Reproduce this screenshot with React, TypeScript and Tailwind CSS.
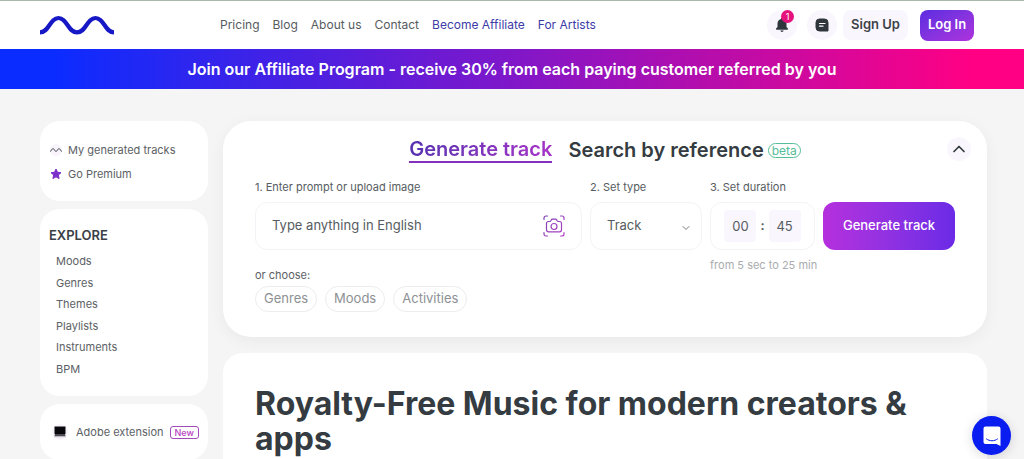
import React, { useState } from 'react';
import { ChevronDown, ChevronUp } from 'lucide-react';

const navItems = [
  { href: '#pricing', label: 'Pricing' },
  { href: '#blog', label: 'Blog' },
  { href: '#about', label: 'About us' },
  { href: '#contact', label: 'Contact' },
  { href: '#affiliate', label: 'Become Affiliate', highlight: true },
  { href: '#artists', label: 'For Artists', highlight: true },
];

const exploreItems = ['Moods', 'Genres', 'Themes', 'Playlists', 'Instruments', 'BPM'];

function Logo() {
  return (
    <svg width="74" height="20" viewBox="0 0 74 20" fill="none" aria-hidden="true">
      <path
        d="M0 17.4C9 17.4 10 3 18.5 3C27 3 28 17.4 37 17.4C46 17.4 47 3 55.5 3C64 3 65 17.4 74 17.4"
        stroke="#1518c4"
        strokeWidth="4.2"
      />
    </svg>
  );
}

function BellIcon() {
  return (
    <svg width="14" height="16" viewBox="0 0 14 16" fill="#2f373d" aria-hidden="true">
      <path d="M7 1c.7 0 1.1.5 1.1 1.1C10.3 2.7 11.5 4.5 11.5 6.6V10l1.4 1.5c.4.5.1 1.2-.6 1.2H1.700c-.7 0-1-.7-.6-1.2L2.500 10V6.600c0-2.100 1.200-3.900 3.400-4.500C5.900 1.500 6.300 1 7 1Z" />
      <path d="M5.300 13.500h3.400c-.2.900-.8 1.400-1.700 1.400s-1.500-.5-1.700-1.400Z" />
    </svg>
  );
}

function NotesIcon() {
  return (
    <svg width="14" height="14" viewBox="0 0 14 14" aria-hidden="true">
      <path d="M4.500 1h5A3.500 3.500 0 0 1 13 4.500V13H4.500A3.500 3.500 0 0 1 1 9.500v-5A3.500 3.500 0 0 1 4.500 1Z" fill="#2f373d" stroke="#2f373d" strokeLinejoin="round" />
      <path d="M4.500 5.500h5.500M4.500 8.200h3.500" stroke="#ffffff" strokeWidth="1.200" strokeLinecap="round" />
    </svg>
  );
}

function CameraIcon() {
  return (
    <svg width="22" height="22" viewBox="0 0 22 22" fill="none" strokeWidth="1.200" strokeLinecap="round" strokeLinejoin="round" aria-hidden="true">
      <defs>
        <linearGradient id="camera" x1="0" y1="0" x2="22" y2="22" gradientUnits="userSpaceOnUse">
          <stop stopColor="#7b3fb5" />
          <stop offset="1" stopColor="#b544c4" />
        </linearGradient>
      </defs>
      <g stroke="url(#camera)">
        <path d="M1 4.500V3a2 2 0 0 1 2-2h1.500M17.500 1H19a2 2 0 0 1 2 2v1.500M21 17.500V19a2 2 0 0 1-2 2h-1.500M4.500 21H3a2 2 0 0 1-2-2v-1.500" />
        <path d="M5.500 6.500h1.200c.7 0 1-.4 1.300-1l.2-.5c.3-.6.700-.9 1.300-.9h3c.6 0 1 .3 1.300.9l.2.500c.3.600.6 1 1.300 1h1.200c1.200 0 2 .8 2 2v6.300c0 1.200-.8 2-2 2h-11c-1.200 0-2-.8-2-2V8.500c0-1.200.8-2 2-2Z" />
        <circle cx="11" cy="11.500" r="3" />
      </g>
    </svg>
  );
}

function LaptopIcon() {
  return (
    <svg width="12" height="12" viewBox="0 0 12 12" aria-hidden="true">
      <path d="M.5.500h11v7.500H.5z" fill="#08080c" />
      <path d="M1 8h10l.6 2.300H.4z" fill="#4e4a54" />
      <path d="M.4 10.300h11.200v.9H.4z" fill="#b9b5bf" />
    </svg>
  );
}

function Header() {
  return (
    <header className="flex h-[49px] items-center justify-between border-t border-[#a9b8aa] bg-white pr-[50px] pl-10">
      <div className="flex items-center">
        <a href="#home" aria-label="Home" className="mr-[106px]">
          <Logo />
        </a>
        <nav className="flex items-center gap-[13px]">
          {navItems.map((item) => (
            <a
              key={item.href}
              href={item.href}
              className={`text-[12px] whitespace-nowrap ${item.highlight ? 'text-[#3c3ca8]' : 'text-[#565b5f]'}`}
            >
              {item.label}
            </a>
          ))}
        </nav>
      </div>

      <div className="flex items-center">
        <button aria-label="Notifications" className="relative mr-2.5 flex size-[30px] items-center justify-center rounded-full bg-[#faf6fd]">
          <BellIcon />
          <span className="absolute top-0 left-[14px] flex size-[13px] items-center justify-center rounded-full bg-[#e5127d] text-[9px] text-white">
            1
          </span>
        </button>
        <button aria-label="Messages" className="mr-1.5 flex size-[30px] items-center justify-center rounded-full bg-[#faf6fd]">
          <NotesIcon />
        </button>
        <button className="mr-3 h-[30px] w-[65px] rounded-lg bg-[#faf6fd] text-[13px] font-semibold whitespace-nowrap text-[#3d4247]">
          Sign Up
        </button>
        <button className="h-[31px] w-[54px] rounded-lg bg-gradient-to-br from-[#5b2be0] to-[#ad31dd] text-[13px] font-semibold whitespace-nowrap text-white">
          Log In
        </button>
      </div>
    </header>
  );
}

function Sidebar() {
  return (
    <aside className="flex w-[168px] shrink-0 flex-col gap-2 text-[11px] text-[#5c6165]">
      <div className="flex flex-col gap-2 rounded-[20px] bg-white px-2.5 pt-[21px] pb-[19px]">
        <a href="#tracks" className="flex h-4 items-center gap-1.5">
          <svg width="12" height="12" viewBox="0 0 12 12" fill="none" aria-hidden="true">
            <circle cx="6" cy="6" r="6" fill="#f9f3fc" />
            <path d="M0 7.500C1.500 7.500 1.600 4.500 3 4.500S4.500 7.500 6 7.500 7.600 4.500 9 4.500s1.500 3 3 3" stroke="#5c6165" />
          </svg>
          My generated tracks
        </a>
        <a href="#premium" className="flex h-4 items-center gap-1.5">
          <svg width="12" height="12" viewBox="0 0 24 24" fill="#7b2fc9" stroke="#7b2fc9" strokeWidth="2" strokeLinejoin="round" aria-hidden="true">
            <path d="m12 2 3 6.500 7 .8-5.200 4.800 1.400 7L12 17.600l-6.200 3.500 1.400-7L2 9.300l7-.8Z" />
          </svg>
          Go Premium
        </a>
      </div>

      <div className="rounded-[20px] bg-white px-[9px] pt-4 pb-[17px]">
        <h2 className="text-[13px] leading-5 font-semibold text-[#3a4046]">EXPLORE</h2>
        <ul className="mt-1.5 flex h-32 flex-col justify-between pl-[7px]">
          {exploreItems.map((item) => (
            <li key={item} className="leading-5">
              <a href={`#${item}`}>{item}</a>
            </li>
          ))}
        </ul>
      </div>

      <div className="flex h-14 items-center rounded-[20px] bg-white pl-3">
        <span className="mr-2 flex size-4 items-center justify-center rounded-full bg-[#f9f3fc]">
          <LaptopIcon />
        </span>
        <a href="#adobe" className="whitespace-nowrap">Adobe extension</a>
        <span className="ml-1.5 rounded-[3px] border border-[#a44bbb] px-1 text-[9px] leading-[11px] font-medium text-[#b93fc4]">
          New
        </span>
      </div>
    </aside>
  );
}

function GeneratePanel() {
  const [prompt, setPrompt] = useState('');
  const [minutes, setMinutes] = useState('00');
  const [seconds, setSeconds] = useState('45');

  return (
    <section className="relative rounded-[28px] bg-white px-8 pt-[15px] pb-[25px] shadow-[0_4px_16px_rgba(0,0,0,0.05)]">
      <div className="flex h-7 items-center justify-center gap-4 text-[20px] leading-6 font-semibold">
        <button className="border-b-2 border-[#8430bb] bg-gradient-to-r from-[#5632b0] to-[#a632c8] bg-clip-text text-transparent">
          Generate track
        </button>
        <button className="flex items-center gap-1 text-[#343b41]">
          Search by reference
          <span className="rounded-full border border-[#56bd99] px-[3px] text-[12px] leading-[13px] font-normal text-[#56bd99]">beta</span>
        </button>
      </div>
      <button aria-label="Collapse" className="absolute top-4 right-4 flex size-6 items-center justify-center rounded-full bg-[#faf6fd]">
        <ChevronUp className="size-5 text-[#2f373d]" />
      </button>

      <form className="mt-3.5 flex gap-2 text-[#565c61]" onSubmit={(e) => e.preventDefault()}>
        <div className="min-w-0 flex-1">
          <label htmlFor="prompt" className="block h-6 text-[11px] leading-[18px]">1. Enter prompt or upload image</label>
          <div className="flex h-12 items-center rounded-xl border border-[#f4f2f6] px-4">
            <input
              id="prompt"
              value={prompt}
              onChange={(e) => setPrompt(e.target.value)}
              placeholder="Type anything in English"
              className="min-w-0 flex-1 text-[13px] outline-none placeholder:text-[#565c61]"
            />
            <button type="button" aria-label="Upload image">
              <CameraIcon />
            </button>
          </div>
        </div>

        <div className="w-28">
          <label htmlFor="type" className="block h-6 text-[11px] leading-[18px]">2. Set type</label>
          <div className="relative">
            <select id="type" className="h-12 w-full appearance-none rounded-xl border border-[#f4f2f6] px-4 text-[13px]">
              <option>Track</option>
              <option>Loop</option>
              <option>Mix</option>
            </select>
            <ChevronDown className="pointer-events-none absolute top-5 right-2.5 size-3 text-[#777c80]" />
          </div>
        </div>

        <div className="w-[105px]">
          <label htmlFor="minutes" className="block h-6 text-[11px] leading-[18px]">3. Set duration</label>
          <div className="flex h-12 items-center justify-center gap-1 rounded-xl border border-[#f4f2f6] text-[13px]">
            <input
              id="minutes"
              value={minutes}
              onChange={(e) => setMinutes(e.target.value)}
              className="size-8 rounded-sm bg-[#faf6fd] text-center outline-none"
            />
            <span className="font-semibold">:</span>
            <input
              aria-label="Seconds"
              value={seconds}
              onChange={(e) => setSeconds(e.target.value)}
              className="size-8 rounded-sm bg-[#faf6fd] text-center outline-none"
            />
          </div>
          <p className="mt-1.5 text-[11px] leading-[18px] whitespace-nowrap text-[#a9acae]">from 5 sec to 25 min</p>
        </div>

        <button className="mt-6 h-12 w-[132px] rounded-xl bg-gradient-to-r from-[#b52fdd] to-[#6b2ae6] text-[13px] font-medium text-white">
          Generate track
        </button>
      </form>

      <p className="-mt-2 text-[11px] leading-[18px] text-[#5c6165]">or choose:</p>
      <div className="mt-0.5 flex gap-2 text-[13px] text-[#8d9195]">
        <button className="h-[26px] rounded-full border border-[#ededf0] px-2">Genres</button>
        <button className="h-[26px] rounded-full border border-[#ededf0] px-2">Moods</button>
        <button className="h-[26px] rounded-full border border-[#ededf0] px-2">Activities</button>
      </div>
    </section>
  );
}

export default function App() {
  return (
    <div className="h-screen overflow-hidden bg-[#f5f5f5] font-['Inter',sans-serif]">
      <Header />
      <a
        href="#affiliate"
        className="flex h-10 items-center justify-center bg-[linear-gradient(90deg,#0a2cff_5%,#7a18cc_48%,#ff0084_95%)] text-[16px] font-semibold text-white"
      >
        Join our Affiliate Program - receive 30% from each paying customer referred by you
      </a>
      <div className="flex items-start gap-[15px] pt-8 pr-[37px] pl-10">
        <Sidebar />
        <main className="flex min-w-0 flex-1 flex-col gap-4">
          <GeneratePanel />
          <section className="rounded-[20px] bg-white px-8 pt-[33px] pb-10">
            <h1 className="text-[32px] leading-[35px] font-bold text-[#343b41]">
              Royalty-Free Music for modern creators & apps
            </h1>
          </section>
        </main>
      </div>
      <button
        aria-label="Open chat"
        className="fixed right-[13px] bottom-1 flex size-[39px] items-center justify-center rounded-full bg-[#0a1df0] shadow-[0_2px_12px_rgba(0,0,0,0.15)]"
      >
        <svg width="18" height="20" viewBox="0 0 18 20" fill="none" aria-hidden="true">
          <path d="M2.500.500h13a2 2 0 0 1 2 2V20l-4-2h-11a2 2 0 0 1-2-2V2.500a2 2 0 0 1 2-2Z" fill="#fff" />
          <path d="M3.500 13c3.200 2.400 7.800 2.400 11 0" stroke="#0a1df0" strokeLinecap="round" />
        </svg>
      </button>
    </div>
  );
}
